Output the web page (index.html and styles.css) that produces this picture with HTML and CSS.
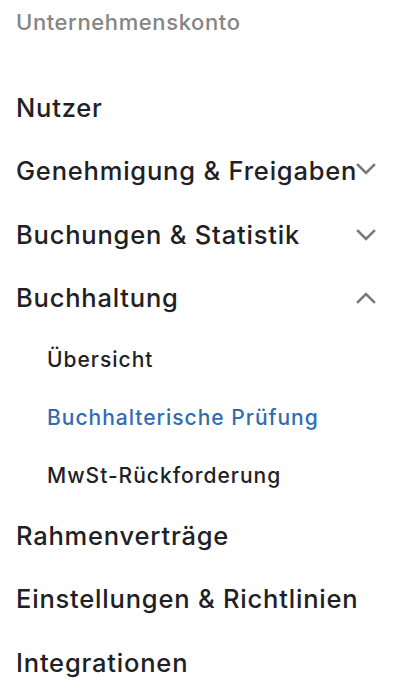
FILE: index.html
```html
<!DOCTYPE html>
<html lang="de">
<head>
<meta charset="utf-8">
<link rel="stylesheet" href="styles.css">
</head>
<body>
<nav class="menu">
  <div class="menu-title">Unternehmenskonto</div>
  <ul class="menu-list">
    <li class="menu-item"><span class="menu-label">Nutzer</span></li>
    <li class="menu-item"><span class="menu-label">Genehmigung &amp; Freigaben</span>
      <svg class="chevron chevron-raised" viewBox="0 0 20 12" width="20" height="12"><polyline points="2,2 10,10 18,2"/></svg></li>
    <li class="menu-item"><span class="menu-label">Buchungen &amp; Statistik</span>
      <svg class="chevron" viewBox="0 0 20 12" width="20" height="12"><polyline points="2,2 10,10 18,2"/></svg></li>
    <li class="menu-item"><span class="menu-label">Buchhaltung</span>
      <svg class="chevron" viewBox="0 0 20 12" width="20" height="12"><polyline points="2,10 10,2 18,10"/></svg></li>
    <li class="sub-list">
      <div class="sub-item">Übersicht</div>
      <div class="sub-item active">Buchhalterische Prüfung</div>
      <div class="sub-item">MwSt-Rückforderung</div>
    </li>
    <li class="menu-item"><span class="menu-label">Rahmenverträge</span></li>
    <li class="menu-item"><span class="menu-label">Einstellungen &amp; Richtlinien</span></li>
    <li class="menu-item"><span class="menu-label">Integrationen</span></li>
  </ul>
</nav>
</body>
</html>
```
FILE: styles.css
```css
html, body {
  margin: 0;
  padding: 0;
  background: #ffffff;
}
body {
  font-family: Inter, "Liberation Sans", Arial, sans-serif;
  color: #1e2125;
}
.menu {
  padding: 0 38px 0 16px;
}
.menu-title {
  font-size: 22px;
  font-weight: 500;
  letter-spacing: 0.6px;
  color: #858585;
  line-height: 24px;
  padding-top: 10px;
  height: 66px;
}
.menu-list {
  list-style: none;
  margin: 0;
  padding: 0;
}
.menu-item {
  display: flex;
  align-items: center;
  height: 63.5px;
}
.menu-label {
  flex: 1 1 auto;
  min-width: 0;
  white-space: nowrap;
  font-size: 25.5px;
  font-weight: 500;
  letter-spacing: 0.8px;
  line-height: 28px;
}
.chevron {
  flex: 0 0 auto;
  fill: none;
  stroke: #7a7a7a;
  stroke-width: 2.6;
  stroke-linecap: square;
}
.chevron-raised {
  margin-bottom: 5px;
}
.sub-list {
  display: flex;
  flex-direction: column;
  padding-left: 31px;
}
.sub-item {
  height: 58px;
  display: flex;
  align-items: center;
  font-size: 21px;
  font-weight: 500;
  letter-spacing: 1px;
  white-space: nowrap;
}
.sub-item.active {
  color: #2f6db1;
}
```
